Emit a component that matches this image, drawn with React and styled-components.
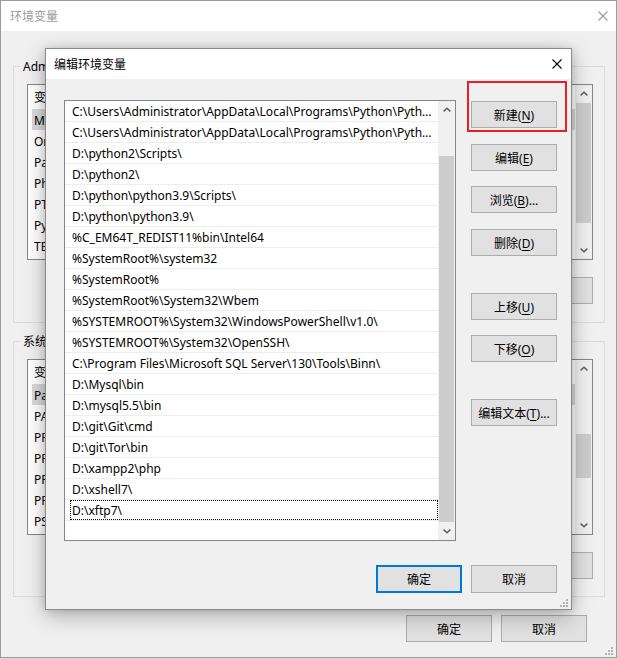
import React from "react";
import styled, { createGlobalStyle } from "styled-components";

const GlobalStyle = createGlobalStyle`
  html, body {
    margin: 0;
    padding: 0;
    background: #d8d8d8;
  }
  body {
    font-family: "Noto Sans", "Noto Sans CJK SC", sans-serif;
    font-size: 12px;
    color: #000000;
  }
  * {
    box-sizing: border-box;
  }
`;

const Desktop = styled.div`
  position: relative;
  width: 618px;
  height: 659px;
  overflow: hidden;
`;

const Window = styled.div`
  position: relative;
  width: 617px;
  height: 658px;
  border: 1px solid #9b9b9b;
  background: #f0f0f0;
  display: flex;
  flex-direction: column;
`;

const Dialog = styled.div`
  position: absolute;
  left: 45px;
  top: 48px;
  width: 527px;
  height: 562px;
  border: 1px solid #8a8a8a;
  background: #f0f0f0;
  display: flex;
  flex-direction: column;
  box-shadow: 0 6px 20px rgba(0, 0, 0, 0.28), 0 0 8px rgba(0, 0, 0, 0.12);
`;

const TitleBar = styled.div`
  flex: none;
  height: 30px;
  background: #ffffff;
  display: flex;
  align-items: center;
  justify-content: space-between;
  padding: 0 ${(p) => p.$right}px 0 ${(p) => p.$left}px;
  color: ${(p) => (p.$inactive ? "#9a9a9a" : "#000000")};
  line-height: 17px;
`;

const CloseIcon = ({ color }) => (
  <svg width="10" height="10" viewBox="0 0 10 10">
    <path d="M0.5 0.5 L9.5 9.5 M9.5 0.5 L0.5 9.5" stroke={color} strokeWidth="1.1" fill="none" />
  </svg>
);

const BackBody = styled.div`
  flex: 1;
  padding: 27px 11px 0 12px;
  display: flex;
  flex-direction: column;
`;

const GroupBox = styled.fieldset`
  margin: ${(p) => p.$top}px 0 0 0;
  padding: 9px 11px ${(p) => p.$bottom}px 13px;
  border: 1px solid #dcdcdc;
  min-width: 0;
`;

const Legend = styled.legend`
  padding: 0 2px;
  margin-left: -6px;
  line-height: 17px;
  font-size: 12px;
`;

const ListView = styled.div`
  height: 176px;
  border: 1px solid #828790;
  background: #ffffff;
  display: flex;
  overflow: hidden;
`;

const ListColumns = styled.div`
  flex: 1;
  min-width: 0;
  display: flex;
  flex-direction: column;
`;

const ListHeader = styled.div`
  height: 24px;
  flex: none;
  display: grid;
  grid-template-columns: 150px 1fr;
  align-items: center;
  padding: 1px 0 0 6px;
  line-height: 17px;
`;

const ListItem = styled.div`
  height: 21px;
  flex: none;
  margin-left: 4px;
  padding: 1px 0 0 2px;
  display: grid;
  grid-template-columns: 146px 1fr;
  align-items: center;
  white-space: nowrap;
  overflow: hidden;
  line-height: 17px;
  background: ${(p) => (p.$selected ? "#d9d9d9" : "transparent")};
`;

const Cell = styled.span`
  overflow: hidden;
  text-overflow: ellipsis;
  white-space: nowrap;
  padding-right: 6px;
`;

const ButtonRow = styled.div`
  display: flex;
  justify-content: flex-end;
  gap: 9px;
  margin-top: ${(p) => p.$top}px;
  padding-right: ${(p) => p.$right || 0}px;
`;

const Button = styled.button`
  flex: none;
  width: 86px;
  height: ${(p) => p.$h || 27}px;
  margin: ${(p) => p.$top || 0}px 0 0 0;
  padding: 1px 0 0 0;
  border: ${(p) => (p.$default ? "2px solid #0078d7" : "1px solid #adadad")};
  background: #e1e1e1;
  font-family: "Noto Sans", "Noto Sans CJK SC", sans-serif;
  font-size: 12px;
  line-height: 17px;
  color: #000000;
  text-align: center;

  u {
    text-underline-offset: 2px;
  }
`;

const ScrollBar = styled.div`
  flex: none;
  width: 17px;
  background: #f0f0f0;
  display: flex;
  flex-direction: column;
`;

const ScrollArrow = styled.div`
  flex: none;
  height: 17px;
  display: flex;
  align-items: center;
  justify-content: center;
`;

const ScrollTrack = styled.div`
  flex: 1;
  display: flex;
  flex-direction: column;
`;

const ScrollThumb = styled.div`
  margin: ${(p) => p.$top}px 1px 0 1px;
  height: ${(p) => p.$height}px;
  background: #cdcdcd;
`;

const Chevron = ({ down }) => (
  <svg width="8" height="5" viewBox="0 0 8 5" style={down ? { transform: "rotate(180deg)" } : undefined}>
    <polyline points="0.6,4.4 4,1.2 7.4,4.4" stroke="#606060" strokeWidth="1.5" fill="none" />
  </svg>
);

const Scroller = ({ thumbTop, thumbHeight }) => (
  <ScrollBar>
    <ScrollArrow>
      <Chevron />
    </ScrollArrow>
    <ScrollTrack>
      <ScrollThumb $top={thumbTop} $height={thumbHeight} />
    </ScrollTrack>
    <ScrollArrow>
      <Chevron down />
    </ScrollArrow>
  </ScrollBar>
);

const Grip = styled.svg`
  position: absolute;
  right: 3px;
  bottom: 2px;
`;

const ResizeGrip = () => (
  <Grip width="8" height="8" viewBox="0 0 8 8">
    {[
      [6, 0],
      [3, 3],
      [6, 3],
      [0, 6],
      [3, 6],
      [6, 6],
    ].map(([x, y]) => (
      <rect key={`${x}-${y}`} x={x} y={y} width="2" height="2" fill="#b4b4b4" />
    ))}
  </Grip>
);

const DialogBody = styled.div`
  position: relative;
  flex: 1;
  padding: 21px 14px 16px 18px;
  display: flex;
  flex-direction: column;
`;

const EditorRow = styled.div`
  display: flex;
  gap: 15px;
  height: 441px;
`;

const PathList = styled.div`
  width: 392px;
  height: 441px;
  border: 1px solid #828790;
  background: #ffffff;
  display: flex;
`;

const PathRows = styled.div`
  flex: 1;
  min-width: 0;
  display: flex;
  flex-direction: column;
`;

const PathRow = styled.div`
  flex: none;
  height: 21px;
  border-bottom: 1px solid #ededed;
  padding-left: 5px;
  display: flex;
`;

const PathText = styled.div`
  flex: 1;
  min-width: 0;
  padding: 1px 4px 0 1px;
  border: 1px dotted ${(p) => (p.$focused ? "#000000" : "transparent")};
  line-height: 17px;
  white-space: nowrap;
  overflow: hidden;
  text-overflow: ellipsis;
`;

const SideButtons = styled.div`
  display: flex;
  flex-direction: column;
  padding-top: 1px;
`;

const Highlight = styled.div`
  position: absolute;
  left: 421px;
  top: 2px;
  width: 100px;
  height: 51px;
  border: 2px solid #ec1c24;
  pointer-events: none;
`;

const Footer = styled.div`
  display: flex;
  justify-content: flex-end;
  gap: 9px;
  margin-top: 24px;
`;

const paths = [
  "C:\\Users\\Administrator\\AppData\\Local\\Programs\\Python\\Python39\\Scripts\\",
  "C:\\Users\\Administrator\\AppData\\Local\\Programs\\Python\\Python39\\",
  "D:\\python2\\Scripts\\",
  "D:\\python2\\",
  "D:\\python\\python3.9\\Scripts\\",
  "D:\\python\\python3.9\\",
  "%C_EM64T_REDIST11%bin\\Intel64",
  "%SystemRoot%\\system32",
  "%SystemRoot%",
  "%SystemRoot%\\System32\\Wbem",
  "%SYSTEMROOT%\\System32\\WindowsPowerShell\\v1.0\\",
  "%SYSTEMROOT%\\System32\\OpenSSH\\",
  "C:\\Program Files\\Microsoft SQL Server\\130\\Tools\\Binn\\",
  "D:\\Mysql\\bin",
  "D:\\mysql5.5\\bin",
  "D:\\git\\Git\\cmd",
  "D:\\git\\Tor\\bin",
  "D:\\xampp2\\php",
  "D:\\xshell7\\",
  "D:\\xftp7\\",
];

const userVars = [
  ["MOZ_PLUGIN_PATH", "D:\\Program Files (x86)\\Foxit Software\\Foxit Reader\\plugins\\"],
  ["OneDrive", "C:\\Users\\Administrator\\OneDrive"],
  ["Path", "C:\\Users\\Administrator\\AppData\\Local\\Programs\\Python\\Python39\\Scripts\\;..."],
  ["PhpStorm", "D:\\PhpStorm\\bin;"],
  ["PTS_HOME", "D:\\pts"],
  ["PyCharm", "D:\\PyCharm\\bin;"],
  ["TEMP", "%USERPROFILE%\\AppData\\Local\\Temp"],
  ["TMP", "%USERPROFILE%\\AppData\\Local\\Temp"],
];

const systemVars = [
  ["Path", "C:\\Users\\Administrator\\AppData\\Local\\Programs\\Python\\Python39\\Scripts\\;..."],
  ["PATHEXT", ".COM;.EXE;.BAT;.CMD;.VBS;.VBE;.JS;.JSE;.WSF;.WSH;.MSC"],
  ["PROCESSOR_ARCHITECTURE", "AMD64"],
  ["PROCESSOR_IDENTIFIER", "Intel64 Family 6 Model 158 Stepping 10, GenuineIntel"],
  ["PROCESSOR_LEVEL", "6"],
  ["PROCESSOR_REVISION", "9e0a"],
  ["PSModulePath", "%ProgramFiles%\\WindowsPowerShell\\Modules;..."],
];

const VarList = ({ rows, thumbTop, thumbHeight }) => (
  <ListView>
    <ListColumns>
      <ListHeader>
        <span>变量</span>
        <span>值</span>
      </ListHeader>
      {rows.map(([name, value], i) => (
        <ListItem key={name} $selected={i === 0}>
          <Cell>{name}</Cell>
          <Cell>{value}</Cell>
        </ListItem>
      ))}
    </ListColumns>
    <Scroller thumbTop={thumbTop} thumbHeight={thumbHeight} />
  </ListView>
);

const Label = ({ text, hot, tail = "" }) => (
  <>
    {text}(<u>{hot}</u>){tail}
  </>
);

const App = () => {
  return (
    <Desktop>
      <GlobalStyle />
      <Window>
        <TitleBar $left={9} $right={8} $inactive>
          <span>环境变量</span>
          <CloseIcon color="#9a9a9a" />
        </TitleBar>
        <BackBody>
          <GroupBox $top={0} $bottom={18}>
            <Legend>Administrator 的用户变量(U)</Legend>
            <VarList rows={userVars} thumbTop={1} thumbHeight={120} />
            <ButtonRow $top={17}>
              <Button>
                <Label text="新建" hot="N" tail="..." />
              </Button>
              <Button>
                <Label text="编辑" hot="E" tail="..." />
              </Button>
              <Button>
                <Label text="删除" hot="D" />
              </Button>
            </ButtonRow>
          </GroupBox>
          <GroupBox $top={10} $bottom={17}>
            <Legend>系统变量(S)</Legend>
            <VarList rows={systemVars} thumbTop={57} thumbHeight={44} />
            <ButtonRow $top={17}>
              <Button>
                <Label text="新建" hot="W" tail="..." />
              </Button>
              <Button>
                <Label text="编辑" hot="I" tail="..." />
              </Button>
              <Button>
                <Label text="删除" hot="L" />
              </Button>
            </ButtonRow>
          </GroupBox>
          <ButtonRow $top={18} $right={18}>
            <Button>确定</Button>
            <Button>取消</Button>
          </ButtonRow>
        </BackBody>
        <ResizeGrip />
      </Window>

      <Dialog>
        <TitleBar $left={8} $right={9}>
          <span>编辑环境变量</span>
          <CloseIcon color="#000000" />
        </TitleBar>
        <DialogBody>
          <EditorRow>
            <PathList>
              <PathRows>
                {paths.map((p, i) => (
                  <PathRow key={p}>
                    <PathText $focused={i === paths.length - 1}>{p}</PathText>
                  </PathRow>
                ))}
              </PathRows>
              <Scroller thumbTop={38} thumbHeight={366} />
            </PathList>
            <SideButtons>
              <Button>
                <Label text="新建" hot="N" />
              </Button>
              <Button $top={16}>
                <Label text="编辑" hot="E" />
              </Button>
              <Button $top={15}>
                <Label text="浏览" hot="B" tail="..." />
              </Button>
              <Button $top={16}>
                <Label text="删除" hot="D" />
              </Button>
              <Button $top={37}>
                <Label text="上移" hot="U" />
              </Button>
              <Button $top={15}>
                <Label text="下移" hot="O" />
              </Button>
              <Button $top={37}>
                <Label text="编辑文本" hot="T" tail="..." />
              </Button>
            </SideButtons>
          </EditorRow>
          <Footer>
            <Button $h={28} $default>
              确定
            </Button>
            <Button $h={28}>取消</Button>
          </Footer>
          <Highlight />
        </DialogBody>
        <ResizeGrip />
      </Dialog>
    </Desktop>
  );
};

export default App;
